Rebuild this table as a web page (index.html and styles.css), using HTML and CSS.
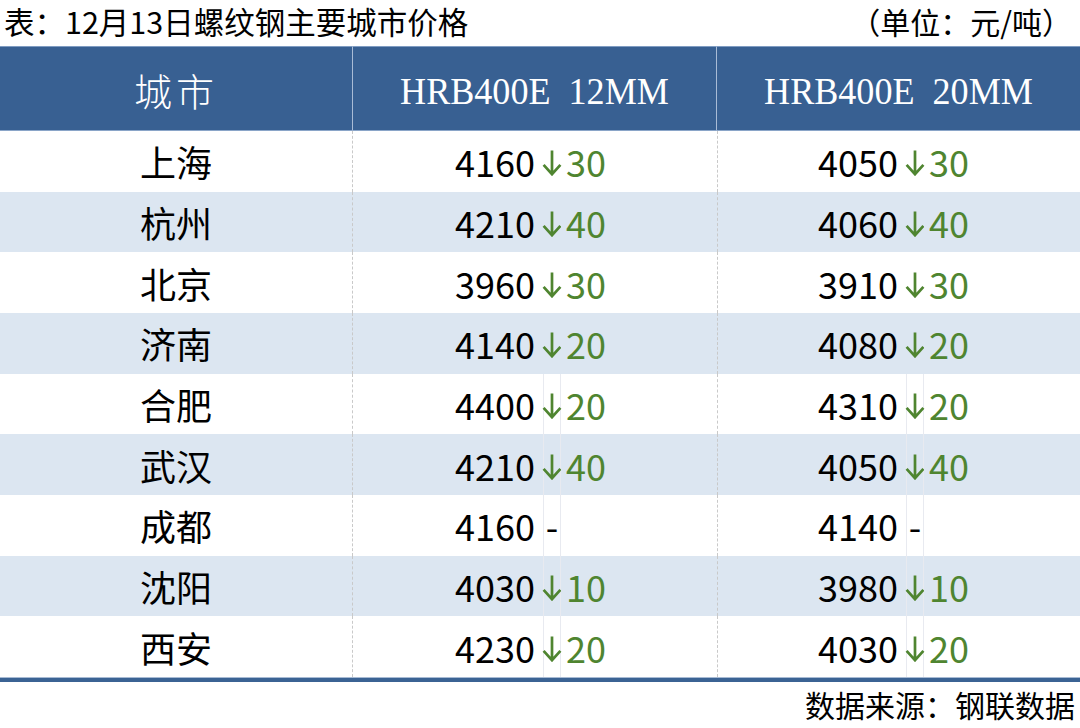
FILE: index.html
```html
<!DOCTYPE html>
<html lang="zh-CN">
<head>
<meta charset="utf-8">
<link rel="stylesheet" href="styles.css">
</head>
<body>
<svg width="0" height="0" class="defs" aria-hidden="true">
  <defs>
    <symbol id="down" viewBox="0 0 20 26">
      <path d="M10 0.5 V24.2 M1.6 14.8 L10 24.2 L18.4 14.8" fill="none" stroke="currentColor" stroke-width="2.7" stroke-linecap="butt" stroke-linejoin="miter"/>
    </symbol>
  </defs>
</svg>
<div class="page">
  <div class="titlebar">
    <span class="title">表：12月13日螺纹钢主要城市价格</span>
    <span class="unit">（单位：元/吨）</span>
  </div>
  <div class="grid">
    <div class="hd hd-city">城市</div>
    <div class="hd hd-spec span3"><span class="spec">HRB400E&nbsp;&nbsp;12MM</span></div>
    <div class="hd hd-spec span3 last"><span class="spec">HRB400E&nbsp;&nbsp;20MM</span></div>

    <div class="c city">上海</div>
    <div class="c num">4160</div><div class="c arr"><svg class="ic"><use href="#down"/></svg></div><div class="c chg">30</div>
    <div class="c num sep">4050</div><div class="c arr"><svg class="ic"><use href="#down"/></svg></div><div class="c chg">30</div>

    <div class="c city s">杭州</div>
    <div class="c num s">4210</div><div class="c arr s"><svg class="ic"><use href="#down"/></svg></div><div class="c chg s">40</div>
    <div class="c num sep s">4060</div><div class="c arr s"><svg class="ic"><use href="#down"/></svg></div><div class="c chg s">40</div>

    <div class="c city">北京</div>
    <div class="c num">3960</div><div class="c arr"><svg class="ic"><use href="#down"/></svg></div><div class="c chg">30</div>
    <div class="c num sep">3910</div><div class="c arr"><svg class="ic"><use href="#down"/></svg></div><div class="c chg">30</div>

    <div class="c city s">济南</div>
    <div class="c num s">4140</div><div class="c arr s"><svg class="ic"><use href="#down"/></svg></div><div class="c chg s">20</div>
    <div class="c num sep s">4080</div><div class="c arr s"><svg class="ic"><use href="#down"/></svg></div><div class="c chg s">20</div>

    <div class="c city">合肥</div>
    <div class="c num">4400</div><div class="c arr ln"><svg class="ic"><use href="#down"/></svg></div><div class="c chg">20</div>
    <div class="c num sep">4310</div><div class="c arr ln"><svg class="ic"><use href="#down"/></svg></div><div class="c chg">20</div>

    <div class="c city s">武汉</div>
    <div class="c num s">4210</div><div class="c arr s ln"><svg class="ic"><use href="#down"/></svg></div><div class="c chg s">40</div>
    <div class="c num sep s">4050</div><div class="c arr s ln"><svg class="ic"><use href="#down"/></svg></div><div class="c chg s">40</div>

    <div class="c city">成都</div>
    <div class="c num">4160</div><div class="c arr ln dash">-</div><div class="c chg"></div>
    <div class="c num sep">4140</div><div class="c arr ln dash">-</div><div class="c chg"></div>

    <div class="c city s">沈阳</div>
    <div class="c num s">4030</div><div class="c arr s ln"><svg class="ic"><use href="#down"/></svg></div><div class="c chg s">10</div>
    <div class="c num sep s">3980</div><div class="c arr s ln"><svg class="ic"><use href="#down"/></svg></div><div class="c chg s">10</div>

    <div class="c city">西安</div>
    <div class="c num">4230</div><div class="c arr ln"><svg class="ic"><use href="#down"/></svg></div><div class="c chg">20</div>
    <div class="c num sep">4030</div><div class="c arr ln"><svg class="ic"><use href="#down"/></svg></div><div class="c chg">20</div>
  </div>
  <div class="bottomline"></div>
  <div class="source">数据来源：钢联数据</div>
</div>
</body>
</html>
```

FILE: styles.css
```css
html, body {
  margin: 0;
  padding: 0;
  background: #ffffff;
}
.defs {
  position: absolute;
  width: 0;
  height: 0;
  overflow: hidden;
}
.page {
  width: 1080px;
  height: 728px;
  overflow: hidden;
  font-family: "Noto Sans CJK SC", "Noto Sans", sans-serif;
  color: #000;
}
.titlebar {
  height: 46px;
  display: flex;
  justify-content: space-between;
  align-items: center;
  padding: 0 8px 0 4px;
  font-size: 30.5px;
  line-height: 46px;
}
.title, .unit {
  position: relative;
  top: -2px;
}
.unit {
  font-size: 30px;
}
.grid {
  display: grid;
  grid-template-columns: 353px 190px 18px 156px 189px 18px 156px;
  grid-template-rows: 85px repeat(9, 60.67px);
  border-left: 1px solid #e6e9ef;
  margin-left: -1px;
}
.hd {
  background: #386092;
  color: #ffffff;
  display: flex;
  align-items: center;
  justify-content: center;
  border-top: 1px solid #7f9cc2;
  border-bottom: 1px solid #8aa5c8;
  box-sizing: border-box;
}
.hd-city {
  font-family: "Noto Sans CJK SC", sans-serif;
  font-weight: 300;
  font-size: 38px;
  letter-spacing: 4px;
  border-right: 1px solid #a9bcd6;
  padding-top: 2px;
}
.hd-spec {
  font-family: "Liberation Serif", "DejaVu Serif", serif;
  font-size: 38px;
  border-right: 1px solid #a9bcd6;
  padding-top: 4px;
}
.spec {
  display: inline-block;
  transform: scaleX(0.95);
  transform-origin: center;
  white-space: nowrap;
}
.hd-spec.last {
  border-right: none;
}
.span3 {
  grid-column: span 3;
}
.c {
  font-size: 36px;
  display: flex;
  align-items: center;
  box-sizing: border-box;
  line-height: 1;
  white-space: nowrap;
}
.s {
  background: #dce6f1;
}
.city {
  justify-content: center;
  border-right: 1px dashed #c9c9c9;
}
.num {
  justify-content: flex-end;
  padding-right: 8px;
}
.num.sep {
  border-left: 1px dashed #c9c9c9;
}
.arr {
  justify-content: center;
  color: #4f8530;
  overflow: visible;
  padding-top: 4px;
}
.ic {
  width: 20px;
  height: 26px;
  flex: none;
  margin: 0 -1px;
  display: block;
}
.arr.ln {
  border-left: 1px solid #e8eaf0;
  border-right: 1px solid #e8eaf0;
}
.arr.dash {
  color: #000;
  padding-top: 0;
}
.chg {
  color: #4f8530;
  padding-left: 5px;
}
.bottomline {
  height: 5px;
  border-top: 1px solid #a8bbd4;
  background: #3b6394;
  box-sizing: border-box;
}
.source {
  text-align: right;
  font-size: 30px;
  padding-right: 5px;
  line-height: 40px;
  margin-top: 2px;
}
```
